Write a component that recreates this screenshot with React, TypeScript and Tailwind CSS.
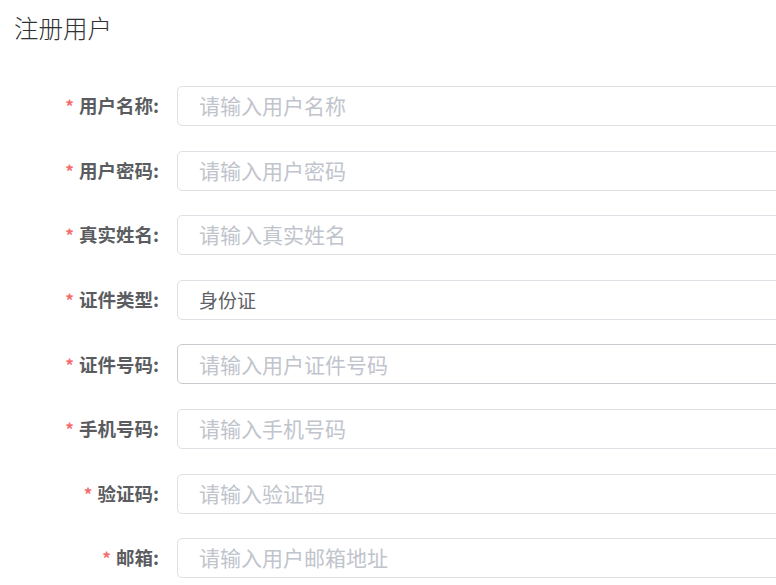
import React from "react";

const rows: { label: string; placeholder?: string; value?: string; hover?: boolean }[] = [
  { label: "用户名称", placeholder: "请输入用户名称" },
  { label: "用户密码", placeholder: "请输入用户密码" },
  { label: "真实姓名", placeholder: "请输入真实姓名" },
  { label: "证件类型", value: "身份证" },
  { label: "证件号码", placeholder: "请输入用户证件号码", hover: true },
  { label: "手机号码", placeholder: "请输入手机号码" },
  { label: "验证码", placeholder: "请输入验证码" },
  { label: "邮箱", placeholder: "请输入用户邮箱地址" },
];

export default function App() {
  return (
    <div
      className="w-[776px] h-[585px] overflow-hidden bg-white"
      style={{ fontFamily: '"Noto Sans CJK SC", "Noto Sans", sans-serif' }}
    >
      <div className="pl-[14px] pt-[13px] h-[86px]">
        <div className="text-[24.5px] leading-[30px] text-[#303133] font-light">注册用户</div>
      </div>
      <div className="flex flex-col gap-[24.6px]">
        {rows.map((r) => (
          <div key={r.label} className="flex items-center h-[40px]">
            <div className="w-[177px] shrink-0 pr-[18px] flex justify-end items-center">
              <span className="text-[#f56c6c] text-[17px] mr-[5px] font-bold">*</span>
              <span className="text-[18.5px] font-bold text-[#5a5c60]">{r.label}:</span>
            </div>
            <div
              className={`w-[640px] shrink-0 h-[40px] rounded-[5px] border flex items-center pl-[21px] ${
                r.hover ? "border-[#c8cad0]" : "border-[#dfe0e6]"
              }`}
            >
              {r.value ? (
                <span className="text-[#606266] text-[19px]">{r.value}</span>
              ) : (
                <span className="text-[#c0c4cc] text-[21px]">{r.placeholder}</span>
              )}
            </div>
          </div>
        ))}
      </div>
    </div>
  );
}
